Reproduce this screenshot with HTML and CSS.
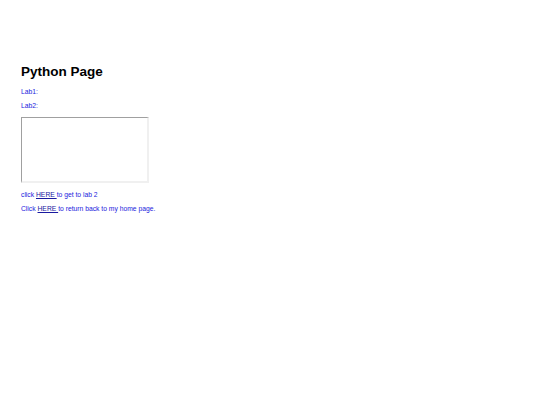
FILE: index.html
```html
<!DOCTYPE html>
<html lang="en">
<head>
    <meta charset="UTF-8">
    <title>Python Page</title>
    <link rel="stylesheet" href="styles.css">
</head>
<body>
    <div class="page">
        <h1>Python Page</h1>
        <p>Lab1:</p>
        <p>Lab2:</p>
        <div class="frame"></div>
        <p>click <a href="#">HERE </a>to get to lab 2</p>
        <p>Click <a href="#">HERE </a>to return back to my home page.</p>
    </div>
</body>
</html>
```

FILE: styles.css
```css
body {
    margin: 0;
    font-family: "Liberation Sans", Arial, sans-serif;
    background: #fff;
}
.page {
    padding: 62px 0 0 21px;
}
h1 {
    font-size: 13.5px;
    color: #000;
    margin: 0 0 3px 0;
    line-height: 20px;
}
p {
    font-size: 6.75px;
    color: #2222dd;
    margin: 0;
    line-height: 14px;
}
a {
    color: #1a1aa0;
}
.frame {
    width: 125px;
    height: 63px;
    margin: 4px 0 5px 0;
    border-style: solid;
    border-width: 1px 2px 2px 1px;
    border-top-color: #a0a0a0;
    border-left-color: #a0a0a0;
    border-bottom-color: #f0f0f0;
    border-right-color: #f0f0f0;
}
```
